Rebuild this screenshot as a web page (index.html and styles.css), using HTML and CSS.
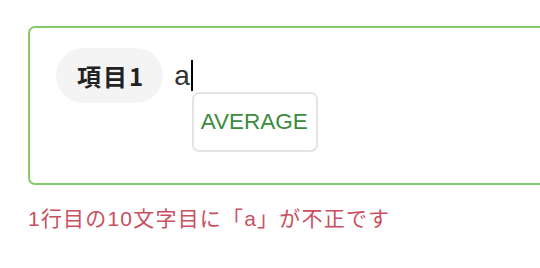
FILE: index.html
```html
<!DOCTYPE html>
<html lang="ja">
<head>
<meta charset="utf-8">
<link rel="stylesheet" href="styles.css">
</head>
<body>
  <div class="field">
    <div class="row">
      <span class="chip">項目1</span>
      <span class="input">
        <span class="typed">a</span>
        <span class="caret">
          <span class="suggest">AVERAGE</span>
        </span>
      </span>
    </div>
  </div>
  <p class="error">1行目の10文字目に「a」が不正です</p>
</body>
</html>
```

FILE: styles.css
```css
html, body {
  margin: 0;
  padding: 0;
  background: #ffffff;
  overflow: hidden;
}
body {
  padding: 26px 0 0 28px;
  font-family: "Liberation Sans", "Noto Sans CJK JP", sans-serif;
}
.field {
  box-sizing: border-box;
  width: 620px;
  height: 159px;
  border: 2px solid #86cb69;
  border-radius: 7px;
  padding: 20px 26px;
}
.row {
  display: flex;
  align-items: center;
  gap: 11px;
}
.chip {
  display: inline-flex;
  align-items: center;
  height: 55px;
  padding: 0 18px 0 21px;
  border-radius: 28px;
  background: #f4f4f4;
  color: #222222;
  font-family: "Noto Sans CJK JP", sans-serif;
  font-weight: 700;
  font-size: 24px;
  letter-spacing: 2px;
}
.input {
  display: flex;
  align-items: center;
}
.typed {
  font-size: 28px;
  color: #333333;
  line-height: 1;
}
.caret {
  position: relative;
  width: 2px;
  height: 31px;
  margin-left: 1px;
  background: #000000;
}
.suggest {
  position: absolute;
  left: 1px;
  top: 32px;
  box-sizing: border-box;
  height: 60px;
  display: flex;
  align-items: center;
  padding: 0 8px 0 7px;
  border: 2px solid #e4e4e8;
  border-radius: 7px;
  background: #ffffff;
  color: #3c8b3f;
  font-size: 22.5px;
  white-space: nowrap;
}
.error {
  margin: 19px 0 0 0;
  font-family: "Liberation Sans", "Noto Sans CJK JP", sans-serif;
  font-size: 21px;
  line-height: 30px;
  letter-spacing: 1.2px;
  color: #c94f5f;
}
```
